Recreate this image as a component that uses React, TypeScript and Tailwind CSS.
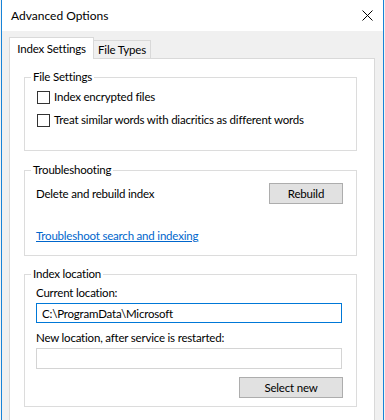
import { useState } from 'react';
import type { ReactNode } from 'react';

const font = "font-['Lato','Liberation_Sans',sans-serif]";
const txt = 'text-[11.5px] leading-[16px] tracking-[-0.2px]';

function GroupBox({ title, className, children }: { title: string; className?: string; children: ReactNode }) {
  return (
    <div className={`relative ml-[14px] w-[333px] border border-[#dcdcdc] ${className ?? ''}`}>
      <span className={`absolute -top-[9px] left-[6px] bg-white px-[2px] text-black ${txt}`}>{title}</span>
      {children}
    </div>
  );
}

function CheckRow({ label, className }: { label: string; className?: string }) {
  const [checked, setChecked] = useState(false);
  return (
    <label className={`flex items-center gap-[4px] ${className ?? ''}`}>
      <span
        onClick={() => setChecked(!checked)}
        className="flex h-[13px] w-[13px] items-center justify-center border border-[#333333] bg-white"
      >
        {checked && (
          <svg width="9" height="9" viewBox="0 0 9 9">
            <path d="M1 4.5 L3.5 7 L8 1.5" stroke="#000" strokeWidth="1.2" fill="none" />
          </svg>
        )}
      </span>
      <span className={txt}>{label}</span>
    </label>
  );
}

function WinButton({ children, className }: { children: ReactNode; className?: string }) {
  return (
    <button
      type="button"
      className={`h-[21px] border border-[#adadad] bg-[#e1e1e1] text-black hover:border-[#0078d7] hover:bg-[#e5f1fb] ${txt} ${className ?? ''}`}
    >
      {children}
    </button>
  );
}

export default function App() {
  return (
    <div className={`h-[420px] w-[385px] overflow-hidden bg-[#f3f3f3] px-px text-black ${font}`}>
      <div className="flex h-full flex-col border-x border-[#1883d7] bg-[#f0f0f0]">
        {/* title bar */}
        <div className="flex h-[31px] items-center justify-between bg-white pl-[9px] pr-[9px]">
          <span className="text-[12px] leading-[16px]">Advanced Options</span>
          <svg width="11" height="11" viewBox="0 0 11 11" className="mr-[1px]">
            <path d="M0.5 0.5 L10.5 10.5 M10.5 0.5 L0.5 10.5" stroke="#000" strokeWidth="1" />
          </svg>
        </div>

        {/* tabs */}
        <div className="ml-[7px] mt-[6px] flex items-end">
          <div className={`relative z-10 -mb-px flex h-[22px] w-[85px] items-center justify-center border border-b-0 border-[#d9d9d9] bg-white ${txt}`}>
            Index Settings
          </div>
          <div className={`flex h-[18px] w-[57px] items-center justify-center border border-b-0 border-l-0 border-[#d9d9d9] bg-[#f0f0f0] ${txt}`}>
            File Types
          </div>
        </div>

        {/* tab panel */}
        <div className="ml-[7px] w-[366px] flex-1 border border-b-0 border-[#d9d9d9] bg-white pt-[18px]">
          <GroupBox title="File Settings" className="h-[74px]">
            <CheckRow label="Index encrypted files" className="ml-[12px] mt-[11px]" />
            <CheckRow label="Treat similar words with diacritics as different words" className="ml-[12px] mt-[7px]" />
          </GroupBox>

          <GroupBox title="Troubleshooting" className="mt-[19px] h-[86px]">
            <div className="ml-[11px] mr-[13px] mt-[12px] flex items-center justify-between">
              <span className={txt}>Delete and rebuild index</span>
              <WinButton className="w-[74px]">Rebuild</WinButton>
            </div>
            <a href="#" className={`ml-[11px] mt-[24px] block text-[#0066cc] underline ${txt}`}>
              Troubleshoot search and indexing
            </a>
          </GroupBox>

          <GroupBox title="Index location" className="mt-[18px] h-[133px]">
            <div className={`ml-[11px] mt-[10px] ${txt}`}>Current location:</div>
            <input
              readOnly
              value="C:\ProgramData\Microsoft"
              className={`ml-[11px] mt-[2px] block h-[20px] w-[306px] border border-[#0078d7] bg-white px-[5px] outline-none ${txt}`}
            />
            <div className={`ml-[11px] mt-[7px] ${txt}`}>New location, after service is restarted:</div>
            <input
              readOnly
              value=""
              className={`ml-[11px] mt-[2px] block h-[21px] w-[306px] border border-[#d4d4d4] bg-white px-[5px] outline-none ${txt}`}
            />
            <div className="mr-[13px] mt-[8px] flex justify-end">
              <WinButton className="w-[104px]">Select new</WinButton>
            </div>
          </GroupBox>
        </div>
      </div>
    </div>
  );
}
